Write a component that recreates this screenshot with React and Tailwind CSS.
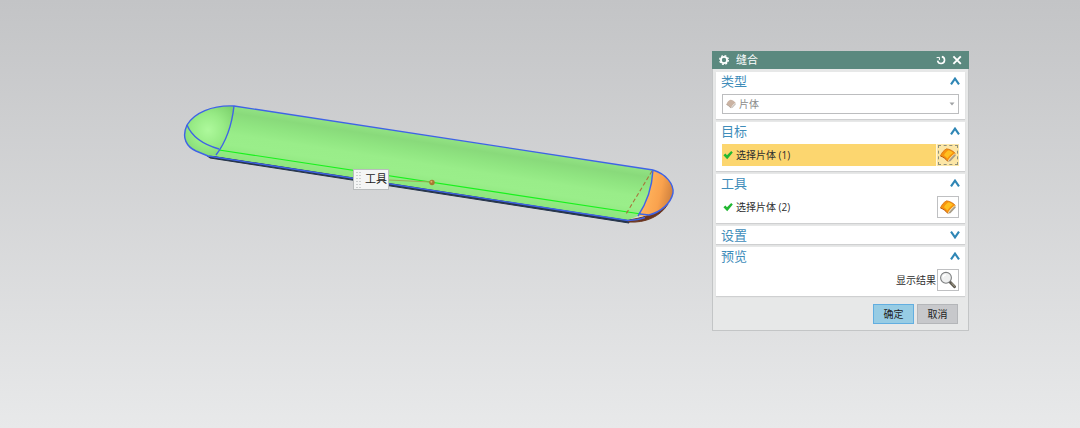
import React, { useState } from "react";

/**
 * ICONS
 */
const GearIcon = () => (
  <svg viewBox="0 0 12 12" className="h-3 w-3" aria-hidden="true">
    <circle cx="6" cy="6" r="4.4" fill="none" stroke="#fff" strokeWidth="1.2" strokeDasharray="1.9 1.556" />
    <circle cx="6" cy="6" r="3.1" fill="none" stroke="#fff" strokeWidth="1.8" />
  </svg>
);

const ResetIcon = () => (
  <svg viewBox="0 0 12 12" className="h-3 w-3" fill="none" stroke="#fff" strokeWidth="1.6" aria-hidden="true">
    <path d="M6.8 2.6A3.5 3.5 0 1 1 2.6 6.6" />
    <path d="M1.6 3.6L4.4 3.4L4.4 6" strokeWidth="1" />
  </svg>
);

const CloseIcon = () => (
  <svg viewBox="0 0 12 12" className="h-3 w-3" aria-hidden="true">
    <path d="M2.4 2.4l7.4 7.4M9.8 2.4l-7.4 7.4" stroke="#fff" strokeWidth="1.9" fill="none" />
  </svg>
);

const Chevron = ({ open }) => (
  <svg viewBox="0 0 10 8" className="h-2 w-2.5" fill="none" stroke="#2f86b5" strokeWidth="2.1" aria-hidden="true">
    <path d={open ? "M1 7.4L5 1.6L9 7.4" : "M1 0.6L5 6.4L9 0.6"} />
  </svg>
);

const CheckIcon = () => (
  <svg viewBox="0 0 10 10" className="h-2.5 w-2.5 shrink-0" aria-hidden="true">
    <path d="M0.4 5.2L2.4 3.6L4 5.2L8.2 1L9.8 2.4L4.2 9.2Z" fill="#22b832" />
  </svg>
);

const SheetIcon = () => (
  <svg viewBox="0 0 18 18" className="h-[18px] w-[18px]" aria-hidden="true">
    <path d="M8.6 15.4L11.4 15.2L16.8 9.6L16 7.4Z" fill="#a89c86" />
    <path d="M1.4 10C2.8 6.6 4.6 4.4 7.6 2.8C10.8 3.2 14 4.8 16.4 7.4C13.4 9.2 10.8 11.8 8.8 15.4C6.8 13 4.4 11 1.4 10Z" fill="#f7930f" />
    <path d="M5 9.2C6.2 6.6 7.8 5.2 9.8 4.2C11.4 4.8 12.8 5.6 14 6.8C11.8 8.2 10 10 8.4 12.4C7.4 11.2 6.2 10 5 9.2Z" fill="#ffc020" />
    <path d="M8.8 15.4C10.8 11.8 13.4 9.2 16.4 7.4" fill="none" stroke="#fbe3a4" strokeWidth="0.7" />
    <path d="M1.4 10C4.4 11 6.8 13 8.8 15.4" fill="none" stroke="#b4530e" strokeWidth="0.9" />
    <path d="M1.4 10C2.8 6.6 4.6 4.4 7.6 2.8C10.8 3.2 14 4.8 16.4 7.4" fill="none" stroke="#d06c10" strokeWidth="0.7" />
  </svg>
);

const MutedSheetIcon = () => (
  <svg viewBox="0 0 10 10" className="h-2.5 w-2.5" aria-hidden="true">
    <path d="M4.6 9.2L6.4 9L9.8 5.4L9.4 3.8Z" fill="#c9c4be" />
    <path d="M0.4 5.4C1.2 3.2 2.4 1.6 4.4 0.8C6.6 1 8.4 2.2 9.6 3.8C7.6 5 6 6.8 4.8 9C3.6 7.4 2.2 6.2 0.4 5.4Z" fill="#cab3a3" />
    <path d="M0.4 5.4C2.2 6.2 3.6 7.4 4.8 9" fill="none" stroke="#a3968d" strokeWidth="0.7" />
  </svg>
);

const MagnifierIcon = () => (
  <svg viewBox="0 0 18 18" className="h-[18px] w-[18px]" aria-hidden="true">
    <path d="M11 11L15.6 15.8" stroke="#5b574e" strokeWidth="2.8" strokeLinecap="round" />
    <path d="M12.4 12L15.8 15.4" stroke="#bcb69e" strokeWidth="1" />
    <circle cx="7" cy="6.8" r="5.4" fill="#eff0f0" stroke="#7d7f80" strokeWidth="1.1" />
    <path d="M4 6.4A3.2 3.2 0 0 1 7 3.8" stroke="#fff" strokeWidth="1.2" fill="none" />
  </svg>
);

/**
 * MODEL VIEW
 */
const CapsuleModel = () => (
  <svg viewBox="180 100 500 130" className="absolute left-[180px] top-[100px] h-[130px] w-[500px]" role="img" aria-label="片体">
    <defs>
      <linearGradient id="body" gradientUnits="userSpaceOnUse" x1="440" y1="137" x2="432" y2="189">
        <stop offset="0" stopColor="#93e384" />
        <stop offset="0.15" stopColor="#89da7b" />
        <stop offset="0.35" stopColor="#90e581" />
        <stop offset="0.55" stopColor="#99ed89" />
        <stop offset="0.75" stopColor="#9aee8a" />
        <stop offset="1" stopColor="#8ee67e" />
      </linearGradient>
      <radialGradient id="leftCap" gradientUnits="userSpaceOnUse" cx="208" cy="130" r="32">
        <stop offset="0" stopColor="#aef99c" />
        <stop offset="0.5" stopColor="#98eb86" />
        <stop offset="1" stopColor="#7dd26d" />
      </radialGradient>
      <linearGradient id="rightCap" gradientUnits="userSpaceOnUse" x1="645" y1="195" x2="673" y2="201">
        <stop offset="0" stopColor="#ffb35c" />
        <stop offset="0.5" stopColor="#f9a24e" />
        <stop offset="1" stopColor="#c97c3c" />
      </linearGradient>
    </defs>

    {/* shaded underside */}
    <path d="M206 155L210 158L629 223L628 219Z" fill="#26344a" stroke="#26344a" strokeWidth="1" />
    <path d="M627 220C640 219 656 214 668 204C660 217 645 223 629 222Z" fill="#6b3620" stroke="#6b3620" />

    <path d="M234 106L653 170C652 188 646 204 638 216L628 220L208 155L216 154C226 142 232 124 234 106Z" fill="url(#body)" />
    <path d="M234 106C212 105 194 113 187 125C181 138 187 147 196 151L208 156L216 155C226 142 232 124 234 106Z" fill="url(#leftCap)" />
    <path d="M653 170C666 174 674 184 673 193C671 206 655 217 638 216C646 204 652 188 653 170Z" fill="url(#rightCap)" />

    <path d="M219 150L641 214" stroke="#18f21c" strokeWidth="1.1" />
    <path d="M652 171L626 214" stroke="#a8743c" strokeWidth="1.1" strokeDasharray="4 2.5" />

    <g fill="none" stroke="#3f63e6" strokeWidth="1.4" strokeLinejoin="round">
      <path d="M653 170L234 106C212 105 194 113 187 125C181 138 187 147 196 151L208 156L628 220.5C636 220 641 219 645 217.5" />
      <path d="M234 106C232 124 226 142 216 155" />
      <path d="M187 125C192 137 205 145 219 149" />
      <path d="M653 170C652 188 646 204 638 216" />
      <path d="M653 170C666 174 674 184 673 193C671 203 661 212 649 215L640 214" />
    </g>

    <path d="M388 180L431 182" stroke="#9cab55" strokeWidth="1" />
    <circle cx="432" cy="182.5" r="2.7" fill="#a97831" />
    <circle cx="431.4" cy="181.8" r="1" fill="#dfb268" />
  </svg>
);

const ModelTag = ({ children }) => (
  <div className="absolute left-[353px] top-[169px] flex h-[21px] items-center gap-1 border border-[#b9bcbd] bg-[#f4f5f5] pl-0.5 pr-px text-[11px] text-[#222]">
    <svg viewBox="0 0 5 18" className="h-[18px] w-[5px]" aria-hidden="true">
      <path d="M1 1V18M4 1V18" stroke="#a3a7a9" strokeWidth="1" strokeDasharray="1 2" />
    </svg>
    {children}
  </div>
);

/**
 * DIALOG PARTS
 */
const Section = ({ title, defaultOpen = true, children }) => {
  const [open, setOpen] = useState(defaultOpen);
  return (
    <section className="bg-white shadow-[0_1px_1px_#cfd0d1]">
      <h2>
        <button
          type="button"
          aria-expanded={open}
          onClick={() => setOpen(!open)}
          className="flex h-[18px] w-full cursor-pointer items-center justify-between px-[5px] text-[13px] leading-[18px] text-[#3f8dba]"
        >
          {title}
          <Chevron open={open} />
        </button>
      </h2>
      {open && children && <div className="px-1.5 pb-[5px] pt-1">{children}</div>}
    </section>
  );
};

const SelectRow = ({ label, active }) => (
  <div className={`flex h-[22px] ${active ? "bg-[#fcd66f]" : ""}`}>
    <div className="flex flex-1 items-center gap-[3px] pl-px text-[10px] text-[#2d2d2d]">
      <CheckIcon />
      {label}
    </div>
    <button
      type="button"
      aria-label={label}
      className={`flex w-[22px] cursor-pointer items-center justify-center ${
        active ? "bg-[#fce6a6] shadow-[-1px_0_0_#fff6dc]" : "border border-[#bfc0c2] bg-white"
      }`}
    >
      <span className={active ? "border border-dashed border-[#8f917c]" : ""}>
        <SheetIcon />
      </span>
    </button>
  </div>
);

const SewDialog = () => (
  <div
    role="dialog"
    aria-labelledby="dialog-title"
    className="absolute right-[111px] top-[51px] w-[257px] border border-t-0 border-[#c3c5c6] bg-[#e7e8e8]"
  >
    <header className="-mx-px flex h-[18px] items-center bg-[#5b897f] px-1.5 text-white">
      <GearIcon />
      <h1 id="dialog-title" className="flex-1 pl-1.5 text-[11px] leading-[18px]">
        缝合
      </h1>
      <div className="flex gap-1">
        <button type="button" aria-label="重置" className="cursor-pointer">
          <ResetIcon />
        </button>
        <button type="button" aria-label="关闭" className="cursor-pointer">
          <CloseIcon />
        </button>
      </div>
    </header>

    <div className="flex flex-col gap-[3px] px-[3px] pt-[3px]">
      <Section title="类型">
        <div className="relative">
          <select
            disabled
            aria-label="类型"
            className="block h-5 w-full appearance-none border border-[#bcbdbf] bg-white pl-4 text-[10px] text-[#8a8a8a] opacity-100"
          >
            <option>片体</option>
          </select>
          <span className="pointer-events-none absolute left-1 top-[5px]">
            <MutedSheetIcon />
          </span>
          <svg viewBox="0 0 6 4" className="pointer-events-none absolute right-1 top-2 h-1 w-1.5" aria-hidden="true">
            <path d="M0.5 0.5H5.5L3 3.5Z" fill="#a0a2a4" />
          </svg>
        </div>
      </Section>

      <Section title="目标">
        <SelectRow label="选择片体 (1)" active />
      </Section>

      <Section title="工具">
        <SelectRow label="选择片体 (2)" />
      </Section>

      <Section title="设置" defaultOpen={false} />

      <Section title="预览">
        <div className="flex h-[22px] items-center justify-end text-[10px] text-[#2d2d2d]">
          <label htmlFor="show-result" className="pr-px">
            显示结果
          </label>
          <button
            id="show-result"
            type="button"
            className="flex h-[22px] w-[22px] cursor-pointer items-center justify-center border border-[#bfc0c2] bg-white"
          >
            <MagnifierIcon />
          </button>
        </div>
      </Section>
    </div>

    <footer className="flex justify-end gap-[3px] px-2.5 pb-1.5 pt-2 text-[10px] text-[#222]">
      <button type="button" className="h-5 w-[41px] cursor-pointer border border-[#62aee0] bg-[#97cce4]">
        确定
      </button>
      <button type="button" className="h-5 w-[41px] cursor-pointer border border-[#b4b6b9] bg-[#c7c8cb]">
        取消
      </button>
    </footer>
  </div>
);

export default function App() {
  return (
    <main className="relative min-h-screen overflow-hidden bg-linear-to-b from-[#c3c4c6] to-[#e8e9ea] font-['Open_Sans','Noto_Sans_CJK_SC',sans-serif]">
      <CapsuleModel />
      <ModelTag>工具</ModelTag>
      <SewDialog />
    </main>
  );
}
